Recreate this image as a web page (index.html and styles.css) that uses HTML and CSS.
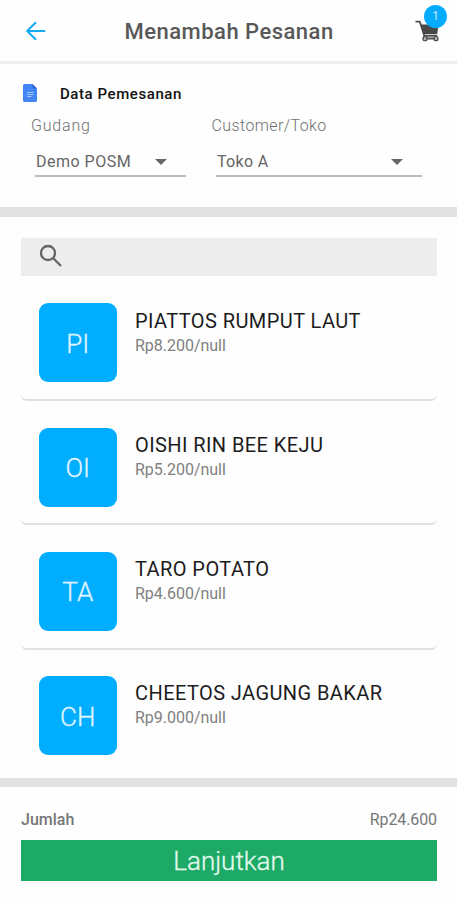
FILE: index.html
```html
<!DOCTYPE html>
<html lang="id">
<head>
<meta charset="utf-8">
<title>Menambah Pesanan</title>
<link rel="stylesheet" href="styles.css">
</head>
<body>
<header class="topbar">
  <svg class="back" viewBox="0 0 20 20"><path d="M19.2 10H1.5M10 1.2L1.2 10l8.8 8.8"/></svg>
  <h1>Menambah Pesanan</h1>
  <div class="cart">
    <svg viewBox="0 0 26 22"><path class="line" d="M0.500 1.700h4.300l4.500 14.200h13"/><path class="solid" d="M5.700 4.500h18l-1.600 9.700H8.700z"/><path class="line" d="M9 16v2.500h13"/><circle cx="10" cy="18.700" r="2"/><circle cx="21" cy="18.700" r="2"/></svg>
    <span class="badge">1</span>
  </div>
</header>
<section class="order">
  <div class="heading">
    <svg viewBox="0 0 14 18"><path fill="#4285f4" d="M1.5 0h8L14 4.5v12a1.5 1.5 0 0 1-1.5 1.5h-11A1.5 1.5 0 0 1 0 16.5v-15A1.5 1.5 0 0 1 1.5 0z"/><path fill="#2f66d5" d="M9.5 0L14 4.5H9.5z"/><path stroke="#a5c4ff" d="M4 8.5h6.5M4 10.5h6.5M4 12.5h4.5"/></svg>
    <h2>Data Pemesanan</h2>
  </div>
  <div class="fields">
    <div class="field warehouse">
      <label>Gudang</label>
      <div class="select"><span class="value">Demo POSM</span><i class="arrow"></i></div>
    </div>
    <div class="field customer">
      <label>Customer/Toko</label>
      <div class="select"><span class="value">Toko A</span><i class="arrow"></i></div>
    </div>
  </div>
</section>
<main class="products">
  <div class="search"><svg viewBox="0 0 24 24"><circle cx="9" cy="9" r="7"/><path d="M14 14l8 8"/></svg></div>
  <article class="card"><div class="tile">PI</div><div class="info"><h3>PIATTOS RUMPUT LAUT</h3><p>Rp8.200/null</p></div></article>
  <article class="card"><div class="tile">OI</div><div class="info"><h3>OISHI RIN BEE KEJU</h3><p>Rp5.200/null</p></div></article>
  <article class="card"><div class="tile">TA</div><div class="info"><h3>TARO POTATO</h3><p>Rp4.600/null</p></div></article>
  <article class="card"><div class="tile">CH</div><div class="info"><h3>CHEETOS JAGUNG BAKAR</h3><p>Rp9.000/null</p></div></article>
</main>
<footer class="summary">
  <div class="total"><b>Jumlah</b><span>Rp24.600</span></div>
  <button>Lanjutkan</button>
</footer>
</body>
</html>
```
FILE: styles.css
```css
* { box-sizing: border-box; }
body { margin: 0; height: 900px; display: flex; flex-direction: column; overflow: hidden; background: #fefefe; font-family: Roboto, sans-serif; color: #111; }
h1, h2, h3, p { margin: 0; font-weight: 400; }
svg { display: block; flex: none; }

.topbar { height: 64px; flex: none; display: flex; border-bottom: 3px solid #eee; padding: 0 16px 0 26px; }
.back { width: 20px; height: 20px; margin-top: 21px; fill: none; stroke: #14a9f5; stroke-width: 2; }
.topbar h1 { flex: 1; padding-left: 78.5px; margin-top: 17px; font-size: 22px; line-height: 30px; font-weight: 500; letter-spacing: 0.48px; color: #585858; white-space: nowrap; }
.cart { position: relative; width: 26px; height: 22px; margin-top: 20px; }
.cart svg { width: 26px; height: 22px; }
.cart .line { fill: none; stroke: #505050; stroke-width: 1.8; }
.cart .solid { fill: #484848; }
.cart circle { fill: #bbb; stroke: #505050; stroke-width: 1.3; }
.badge { position: absolute; left: 9px; top: -15px; width: 23px; height: 23px; border-radius: 50%; background: #05acfd; color: #c5eaff; font-size: 12px; line-height: 23px; text-align: center; }

.order { height: 153px; flex: none; border-bottom: 10px solid #e2e2e2; padding-top: 20px; }
.heading { display: flex; padding-left: 23px; height: 18px; }
.heading svg { width: 14px; height: 18px; }
.heading h2 { margin-left: 23px; font-size: 15px; line-height: 20px; font-weight: 500; letter-spacing: 0.57px; }
.fields { display: flex; padding-left: 31px; margin-top: 14px; }
.field label { display: block; font-size: 16px; line-height: 20px; font-weight: 300; color: #707070; letter-spacing: 0.4px; }
.warehouse { width: 180.5px; }
.warehouse label { letter-spacing: 0.8px; }
.select { display: flex; justify-content: space-between; height: 31px; margin: 10px 0 0 4px; border-bottom: 2px solid #bdbdbd; padding: 0 19px 0 1px; }
.warehouse .select { width: 151px; }
.customer .select { width: 206px; margin-left: 4.5px; }
.value { font-size: 16px; line-height: 31px; color: #666; letter-spacing: 0.35px; white-space: nowrap; }
.warehouse .value { letter-spacing: 0.5px; }
.arrow { margin-top: 13px; border: 6px solid transparent; border-top-color: #666; border-bottom: 0; height: 6px; }

.products { height: 570px; flex: none; padding: 21px 20px 0 21px; border-bottom: 9px solid #e2e2e2; overflow: hidden; }
.search { height: 38px; background: #ededed; padding: 6px 0 0 18px; }
.search svg { width: 24px; height: 24px; fill: none; stroke: #666; stroke-width: 2.3; }
.card { height: 124.3px; padding: 27px 0 0 17.5px; display: flex; border-radius: 0 0 6px 6px; border-bottom: 2px solid #e1e1e1; }
.card:last-child { border-bottom: 0; }
.search + .card { height: 125px; }
.card + .card { padding-top: 26.5px; }
.tile { width: 78.5px; height: 79px; border-radius: 9px; background: #00adff; color: #e0f5ff; display: flex; align-items: center; justify-content: center; padding-top: 2px; font-size: 26px; font-weight: 300; -webkit-text-stroke: 0.3px #e0f5ff; }
.info { margin: 4.5px 0 0 18px; }
.info h3 { font-size: 20px; line-height: 26px; letter-spacing: 0.42px; color: #1c1c1c; white-space: nowrap; }
.info p { font-size: 16px; line-height: 24px; letter-spacing: -0.02px; color: #808080; }
.card + .card .info { margin-top: 4px; }

.summary { flex: 1; padding: 23px 20px 0 21px; }
.total { display: flex; justify-content: space-between; height: 30px; font-size: 16px; line-height: 20px; color: #777; }
.total b { font-weight: 500; }
.total span { letter-spacing: -0.1px; }
button { display: block; width: 100%; height: 41px; padding: 2px 0 0; border: 0; background: #1da966; color: #e4faee; font: 300 26px/39px Roboto, sans-serif; -webkit-text-stroke: 0.3px #e4faee; }
```
